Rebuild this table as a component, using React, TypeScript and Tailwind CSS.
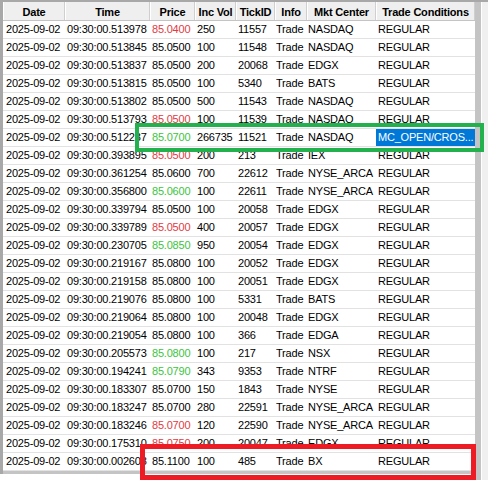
import React from "react";

type Row = {
  time: string;
  price: string;
  dir?: "up" | "down";
  vol: string;
  tick: string;
  mkt: string;
  cond?: string;
  selected?: boolean;
};

const rows: Row[] = [
  { time: "513978", price: "85.0400", dir: "down", vol: "250", tick: "11557", mkt: "NASDAQ" },
  { time: "513845", price: "85.0500", vol: "100", tick: "11548", mkt: "NASDAQ" },
  { time: "513837", price: "85.0500", vol: "200", tick: "20068", mkt: "EDGX" },
  { time: "513815", price: "85.0500", vol: "100", tick: "5340", mkt: "BATS" },
  { time: "513802", price: "85.0500", vol: "500", tick: "11543", mkt: "NASDAQ" },
  { time: "513793", price: "85.0500", dir: "down", vol: "100", tick: "11539", mkt: "NASDAQ" },
  { time: "512237", price: "85.0700", dir: "up", vol: "266735", tick: "11521", mkt: "NASDAQ", cond: "MC_OPEN/CROS...", selected: true },
  { time: "393895", price: "85.0500", dir: "down", vol: "200", tick: "213", mkt: "IEX" },
  { time: "361254", price: "85.0600", vol: "700", tick: "22612", mkt: "NYSE_ARCA" },
  { time: "356800", price: "85.0600", dir: "up", vol: "100", tick: "22611", mkt: "NYSE_ARCA" },
  { time: "339794", price: "85.0500", vol: "100", tick: "20058", mkt: "EDGX" },
  { time: "339789", price: "85.0500", dir: "down", vol: "400", tick: "20057", mkt: "EDGX" },
  { time: "230705", price: "85.0850", dir: "up", vol: "950", tick: "20054", mkt: "EDGX" },
  { time: "219167", price: "85.0800", vol: "100", tick: "20052", mkt: "EDGX" },
  { time: "219158", price: "85.0800", vol: "100", tick: "20051", mkt: "EDGX" },
  { time: "219076", price: "85.0800", vol: "100", tick: "5331", mkt: "BATS" },
  { time: "219064", price: "85.0800", vol: "100", tick: "20048", mkt: "EDGX" },
  { time: "219054", price: "85.0800", vol: "100", tick: "366", mkt: "EDGA" },
  { time: "205573", price: "85.0800", dir: "up", vol: "100", tick: "217", mkt: "NSX" },
  { time: "194241", price: "85.0790", dir: "up", vol: "343", tick: "9353", mkt: "NTRF" },
  { time: "183307", price: "85.0700", vol: "150", tick: "1843", mkt: "NYSE" },
  { time: "183247", price: "85.0700", vol: "280", tick: "22591", mkt: "NYSE_ARCA" },
  { time: "183246", price: "85.0700", dir: "down", vol: "120", tick: "22590", mkt: "NYSE_ARCA" },
  { time: "175310", price: "85.0750", dir: "down", vol: "200", tick: "20047", mkt: "EDGX" },
  { time: "002608", price: "85.1100", vol: "100", tick: "485", mkt: "BX" },
];

const headers = ["Date", "Time", "Price", "Inc Vol", "TickID", "Info", "Mkt Center", "Trade Conditions"];

const cols = "grid grid-cols-[62px_85px_45px_41px_39px_32px_69px_99px]";

function priceColor(dir?: "up" | "down") {
  if (dir === "up") return "text-[#3cc43c]";
  if (dir === "down") return "text-[#e23a3f]";
  return "text-black";
}

export default function App() {
  return (
    <div className="relative w-[488px] h-[480px] bg-white overflow-hidden font-['Liberation_Sans',Arial,sans-serif] text-[11px] tracking-[-0.2px] leading-none text-black">
      <div className="h-[2px] bg-[#a8a8a8]" />
      <div className="flex">
        <div className="w-[3px] h-[472px] bg-[#a8a8a8]" />
        <div className="w-[472px]">
          {/* header */}
          <div className={`${cols} h-[19px] bg-[#efefef] border-b border-[#c4c4c4]`}>
            {headers.map((h) => (
              <div
                key={h}
                className="flex items-center justify-center font-bold border-r border-[#cfcfcf] border-l border-l-white pt-[2px] whitespace-nowrap"
              >
                {h}
              </div>
            ))}
          </div>
          {/* rows */}
          {rows.map((r) => (
            <div key={r.time} className={`${cols} h-[18px] border-b border-[#e2e2e2] whitespace-nowrap`}>
              <div className="flex items-center pl-[3px]">2025-09-02</div>
              <div className="flex items-center pl-[2px]">09:30:00.{r.time}</div>
              <div className={`flex items-center pl-[2px] ${priceColor(r.dir)}`}>{r.price}</div>
              <div className="flex items-center pl-[2px]">{r.vol}</div>
              <div className="flex items-center pl-[2px]">{r.tick}</div>
              <div className="flex items-center pl-[1px]">Trade</div>
              <div className="flex items-center pl-[1px]">{r.mkt}</div>
              <div
                className={`flex items-center pl-[2px] overflow-hidden ${
                  r.selected ? "bg-[#0078d7] text-white" : ""
                }`}
              >
                {r.cond ?? "REGULAR"}
              </div>
            </div>
          ))}
          <div className="h-[3px] bg-[#c4c4c4]" />
        </div>
        <div className="w-[6px] h-[478px] bg-[#c4c4c4]" />
        <div className="w-[7px] h-[478px] bg-[#f0f0f0] border-l border-white" />
      </div>

      {/* annotation boxes */}
      <div className="absolute left-[135px] top-[123px] w-[349px] h-[29px] border-[4px] border-[#22b14c]" />
      <div className="absolute left-[140px] top-[444px] w-[336px] h-[36px] border-[5px] border-[#ed1c24]" />
    </div>
  );
}
